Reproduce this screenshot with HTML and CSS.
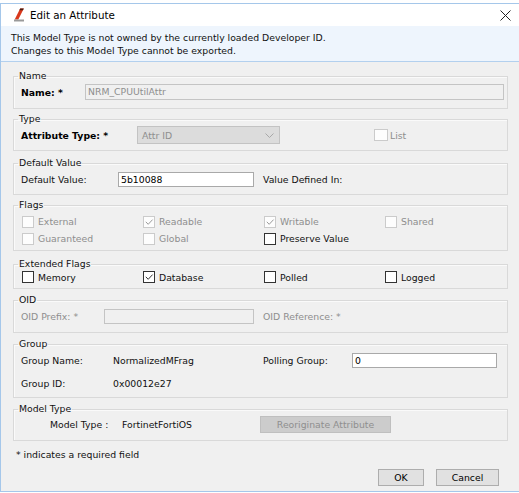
FILE: index.html
```html
<!DOCTYPE html>
<html>
<head>
<meta charset="utf-8">
<title>Edit an Attribute</title>
<link rel="stylesheet" href="styles.css">
</head>
<body>
<div class="window">
  <div class="titlebar">
    <svg class="app-icon" width="12" height="14" viewBox="0 0 12 14">
      <path d="M7.2 0.5 L10.8 0.5 L5.3 11.5 L1.7 11.5 Z" fill="#d9381c"/>
      <path d="M7.2 0.5 L10.8 0.5 L10 2.2 L6.4 2.2 Z" fill="#4a1c10"/>
      <path d="M1 11.5 L11 11.5 L11 13.5 L1 13.5 Z" fill="#9a9a9a"/>
    </svg>
    <span class="title">Edit an Attribute</span>
    <svg class="close" width="11" height="11" viewBox="0 0 11 11">
      <path d="M0.5 0.5 L10.5 10.5 M10.5 0.5 L0.5 10.5" stroke="#222" stroke-width="1" fill="none"/>
    </svg>
  </div>
  <div class="banner">
    <p>This Model Type is not owned by the currently loaded Developer ID.</p>
    <p>Changes to this Model Type cannot be exported.</p>
  </div>

  <fieldset class="fs fs-name">
    <legend>Name</legend>
    <div class="row">
      <span class="lbl bold c-name">Name: *</span>
      <span class="field disabled f-name">NRM_CPUUtilAttr</span>
    </div>
  </fieldset>

  <fieldset class="fs fs-type">
    <legend>Type</legend>
    <div class="row">
      <span class="lbl bold c-type">Attribute Type: *</span>
      <span class="combo">
        <span>Attr ID</span>
        <svg class="chev" width="9" height="5" viewBox="0 0 9 5"><path d="M0.5 0.5 L4.5 4.5 L8.5 0.5" stroke="#a8a8a8" fill="none"/></svg>
      </span>
      <span class="check list-check"><span class="cb dis list-box"></span><span class="dis-text">List</span></span>
    </div>
  </fieldset>

  <fieldset class="fs fs-default">
    <legend>Default Value</legend>
    <div class="row">
      <span class="lbl c-default">Default Value:</span>
      <span class="field f-default">5b10088</span>
      <span class="lbl defined">Value Defined In:</span>
    </div>
  </fieldset>

  <fieldset class="fs fs-flags">
    <legend>Flags</legend>
    <div class="grid">
      <span class="check"><span class="cb dis"></span><span class="dis-text">External</span></span>
      <span class="check"><span class="cb dis"><svg viewBox="0 0 10 10"><path d="M1.8 4.8 L4.2 7.3 L8.6 2.6" stroke="#9a9a9a" fill="none"/></svg></span><span class="dis-text">Readable</span></span>
      <span class="check"><span class="cb dis"><svg viewBox="0 0 10 10"><path d="M1.8 4.8 L4.2 7.3 L8.6 2.6" stroke="#9a9a9a" fill="none"/></svg></span><span class="dis-text">Writable</span></span>
      <span class="check"><span class="cb dis"></span><span class="dis-text">Shared</span></span>
      <span class="check"><span class="cb dis"></span><span class="dis-text">Guaranteed</span></span>
      <span class="check"><span class="cb dis"></span><span class="dis-text">Global</span></span>
      <span class="check"><span class="cb"></span><span>Preserve Value</span></span>
    </div>
  </fieldset>

  <fieldset class="fs fs-ext">
    <legend>Extended Flags</legend>
    <div class="grid ext-grid">
      <span class="check"><span class="cb"></span><span>Memory</span></span>
      <span class="check"><span class="cb"><svg viewBox="0 0 10 10"><path d="M1.8 4.8 L4.2 7.3 L8.6 2.6" stroke="#333" fill="none"/></svg></span><span>Database</span></span>
      <span class="check"><span class="cb"></span><span>Polled</span></span>
      <span class="check"><span class="cb"></span><span>Logged</span></span>
    </div>
  </fieldset>

  <fieldset class="fs fs-oid">
    <legend>OID</legend>
    <div class="row">
      <span class="lbl dis-text c-oid">OID Prefix: *</span>
      <span class="field disabled f-oid"></span>
      <span class="lbl dis-text defined">OID Reference: *</span>
    </div>
  </fieldset>

  <fieldset class="fs fs-group">
    <legend>Group</legend>
    <div class="row">
      <span class="lbl c-group">Group Name:</span>
      <span class="val c-gval">NormalizedMFrag</span>
      <span class="lbl c-poll">Polling Group:</span>
      <span class="field f-poll">0</span>
    </div>
    <div class="row row2">
      <span class="lbl c-group">Group ID:</span>
      <span class="val">0x00012e27</span>
    </div>
  </fieldset>

  <fieldset class="fs fs-model">
    <legend>Model Type</legend>
    <div class="row row-model">
      <span class="lbl c-model">Model Type :</span>
      <span class="val c-mval">FortinetFortiOS</span>
      <span class="btn btn-dis">Reoriginate Attribute</span>
    </div>
  </fieldset>

  <p class="note">* indicates a required field</p>

  <div class="actions">
    <span class="btn btn-ok">OK</span>
    <span class="btn btn-cancel">Cancel</span>
  </div>
</div>
</body>
</html>
```
FILE: styles.css
```css
html, body {
  margin: 0;
  padding: 0;
  background: #ffffff;
}

body {
  font-family: "DejaVu Sans", sans-serif;
  font-size: 9.3px;
  color: #111;
}

.window {
  margin-top: 3px;
  width: 519px;
  height: 489px;
  box-sizing: border-box;
  border: 1px solid #a5c7ea;
  border-right: none;
  background: #f0f0f0;
  display: flex;
  flex-direction: column;
}

.titlebar {
  height: 22px;
  flex: none;
  background: #ffffff;
  display: flex;
  align-items: center;
  padding-left: 12px;
}

.app-icon {
  flex: none;
  margin-right: 5px;
}

.title {
  font-size: 10.3px;
  color: #000;
}

.close {
  margin-left: auto;
  margin-right: 8px;
}

.banner {
  height: 36px;
  flex: none;
  box-sizing: border-box;
  background: #eef5fd;
  border-bottom: 1px solid #b3d0ee;
  padding: 5px 0 0 10px;
  line-height: 13px;
  color: #111;
}

.banner p {
  margin: 0;
}

.fs {
  margin: 0 11px 0 12px;
  padding: 0 0 5px 7px;
  border: 1px solid #d9d9d9;
  box-shadow: inset 1px 1px 0 #fafafa;
  min-width: 0;
}

.fs legend {
  font-size: 9.3px;
  line-height: 12px;
  padding: 0 1px;
  margin-left: -3px;
  color: #111;
}

.fs-name { margin-top: 8px; padding-bottom: 6px; }
.fs-type { margin-top: 4px; }
.fs-default { margin-top: 6px; }
.fs-flags { margin-top: 4px; padding-top: 2px; padding-bottom: 3px; }
.fs-ext { margin-top: 7px; padding-bottom: 4px; }
.fs-oid { margin-top: 5px; padding-bottom: 6px; }
.fs-group { margin-top: 5px; padding-bottom: 4px; }
.fs-model { margin-top: 5px; padding-bottom: 7px; }

.row {
  display: flex;
  align-items: center;
  height: 20px;
}

.row2 {
  margin-top: 3px;
}

.row-model {
  height: 18px;
}

.lbl, .val {
  flex: none;
  white-space: nowrap;
}

.bold {
  font-weight: bold;
  color: #000;
}

.dis-text {
  color: #8e8e8e;
}

.c-name { width: 64px; }
.c-type { width: 116px; }
.c-default { width: 97px; }
.c-oid { width: 83px; }
.c-group { width: 92px; }
.c-gval { width: 150px; }
.c-poll { width: 89px; }
.c-model { width: 72px; margin-left: 29px; }
.c-mval { width: 138px; }

.defined {
  margin-left: 9px;
}

.field {
  flex: none;
  box-sizing: border-box;
  height: 15px;
  line-height: 13px;
  padding-left: 2px;
  background: #ffffff;
  border: 1px solid #a9a9a9;
  color: #000;
}

.field.disabled {
  background: #f0f0f0;
  border-color: #c4c4c4;
  color: #8e8e8e;
}

.f-name { width: 419px; height: 16px; line-height: 14px; }
.f-default { width: 136px; }
.f-oid { width: 150px; }
.f-poll { width: 145px; }

.combo {
  flex: none;
  box-sizing: border-box;
  width: 143px;
  height: 18px;
  background: #dcdcdc;
  border: 1px solid #c3c3c3;
  color: #8e8e8e;
  display: flex;
  align-items: center;
  padding-left: 4px;
}

.combo .chev {
  margin-left: auto;
  margin-right: 5px;
}

.check {
  display: flex;
  align-items: center;
  white-space: nowrap;
}

.cb {
  flex: none;
  width: 12px;
  height: 12px;
  box-sizing: border-box;
  border: 1px solid #333;
  background: #ffffff;
  margin-right: 4px;
  display: flex;
  align-items: center;
  justify-content: center;
}

.cb svg {
  width: 10px;
  height: 10px;
}

.cb.dis {
  border-color: #cbcbcb;
  background: #fdfdfd;
}

.list-check {
  margin-left: 94px;
}

.list-box {
  width: 14px;
  height: 12px;
  margin-right: 2px;
}

.grid {
  display: grid;
  grid-template-columns: 121px 121px 121px 121px;
  grid-auto-rows: 17px;
  align-items: center;
  padding-left: 1px;
}

.ext-grid {
  grid-auto-rows: 14px;
}

.btn {
  flex: none;
  box-sizing: border-box;
  display: flex;
  align-items: center;
  justify-content: center;
  background: #e1e1e1;
  border: 1px solid #adadad;
  color: #000;
}

.btn-dis {
  width: 131px;
  height: 17px;
  background: #cccccc;
  border-color: #bfbfbf;
  color: #8f8f8f;
}

.note {
  margin: 8px 0 0 15px;
  line-height: 12px;
}

.actions {
  display: flex;
  justify-content: flex-end;
  gap: 12px;
  margin: 8px 20px 0 0;
}

.btn-ok {
  width: 46px;
  height: 17px;
}

.btn-cancel {
  width: 63px;
  height: 17px;
}
```
